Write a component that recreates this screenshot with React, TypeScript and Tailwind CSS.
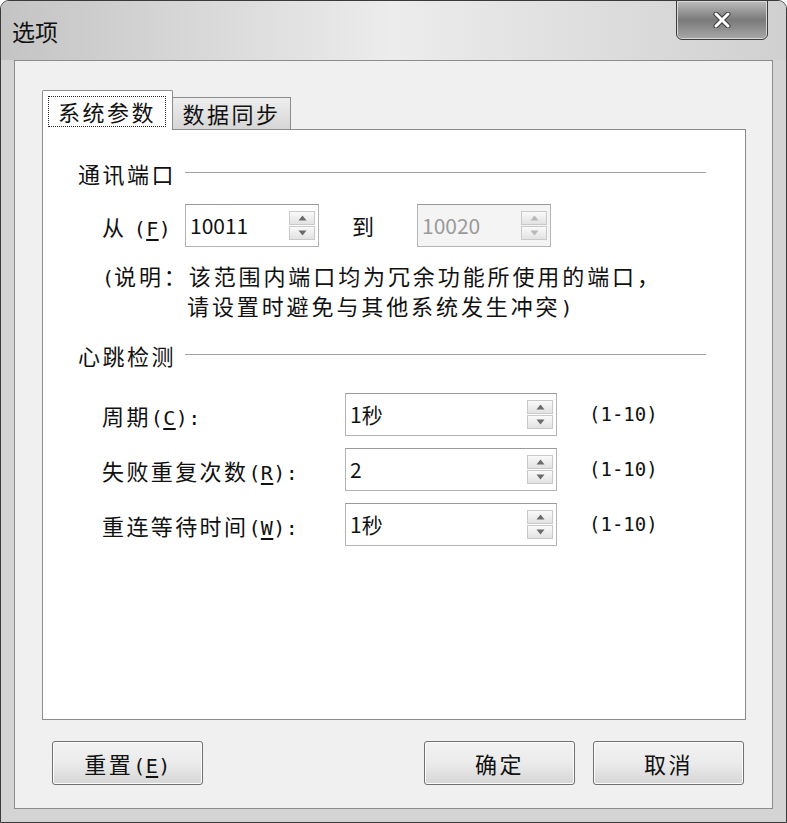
import React from "react";

const CJK = "font-['Noto_Sans_CJK_SC','Noto_Sans',sans-serif]";
const MONO = "font-['DejaVu_Sans_Mono','Liberation_Mono',monospace]";

function Spin({ value, disabled, w }: { value: string; disabled?: boolean; w: string }) {
  return (
    <div
      className={`${w} h-[43px] flex items-stretch border border-[#b4b4b4] border-t-[#9a9a9a] ${
        disabled ? "bg-[#f4f4f4]" : "bg-white"
      }`}
    >
      <div
        className={`flex-1 flex items-center pl-[4px] text-[21px] ${CJK} ${
          disabled ? "text-[#9a9a9a]" : "text-[#111]"
        }`}
      >
        {value}
      </div>
      <div className="w-[29px] flex flex-col py-[6px] pr-[3px] gap-[1px]">
        <div className="flex-1 flex items-center justify-center border border-[#c9c9c9] bg-gradient-to-b from-[#fafafa] to-[#e2e2e2]">
          <svg width="9" height="6" viewBox="0 0 9 6">
            <path d="M4.5 0.5 L8.5 5.5 L0.5 5.5 Z" fill={disabled ? "#b8b8b8" : "#6a6a6a"} />
          </svg>
        </div>
        <div className="flex-1 flex items-center justify-center border border-[#c9c9c9] bg-gradient-to-b from-[#fafafa] to-[#e2e2e2]">
          <svg width="9" height="6" viewBox="0 0 9 6">
            <path d="M0.5 0.5 L8.5 0.5 L4.5 5.5 Z" fill={disabled ? "#b8b8b8" : "#6a6a6a"} />
          </svg>
        </div>
      </div>
    </div>
  );
}

// label like 周期(C): — CJK part, then mono ascii with underlined access key
function Label({ cjk, keyChar, colon, className = "" }: { cjk: string; keyChar: string; colon?: boolean; className?: string }) {
  return (
    <span className={`text-[22px] leading-[28px] tracking-[2.4px] text-[#111] ${CJK} ${className}`}>
      {cjk}
      <span className={`${MONO} text-[20px] leading-none tracking-[0.4px]`}>
        (<span className="underline underline-offset-[3px]">{keyChar}</span>){colon ? ":" : ""}
      </span>
    </span>
  );
}

function GroupHeader({ title }: { title: string }) {
  return (
    <div className="flex items-center h-[28px] pl-[35px] pr-[39px]">
      <span className={`text-[22px] tracking-[2.5px] text-[#111] ${CJK}`}>{title}</span>
      <div className="flex-1 ml-[9px] h-[2px] border-t border-[#a0a0a0] border-b-white border-b" />
    </div>
  );
}

function Btn({ children }: { children: React.ReactNode }) {
  return (
    <button
      className={`w-[151px] h-[44px] rounded-[3px] border border-[#707070] bg-gradient-to-b from-[#f2f2f2] via-[#ebebeb] to-[#d6d6d6] text-[22px] tracking-[2.5px] text-[#111] ${CJK} shadow-[inset_0_0_0_1px_#fcfcfc]`}
    >
      {children}
    </button>
  );
}

const ROWS = [
  { cjk: "周期", k: "C", value: "1秒" },
  { cjk: "失败重复次数", k: "R", value: "2" },
  { cjk: "重连等待时间", k: "W", value: "1秒" },
];

export default function App() {
  return (
    <div className="w-[787px] h-[823px] overflow-hidden bg-[#d4d4d4] border border-[#3a3a3a] rounded-t-[9px] flex flex-col">
      {/* title bar */}
      <div className="h-[59px] flex items-start justify-between pl-[11px] pr-[18px] bg-gradient-to-r from-[#c4c4c4] via-[#ececec] to-[#d0d0d0]">
        <span className={`mt-[13px] text-[23px] text-[#111] ${CJK}`}>选项</span>
        <div className="w-[92px] h-[40px] -mt-px rounded-b-[6px] border border-[#3c3c3c] bg-gradient-to-b from-[#bdbdbd] via-[#7a7a7a] to-[#a8a8a8] flex items-center justify-center shadow-[inset_0_0_0_1px_#d8d8d8]">
          <svg width="18" height="16" viewBox="0 0 18 16">
            <path d="M3 2 L15 14 M15 2 L3 14" stroke="#3a3a3a" strokeWidth="5" strokeLinecap="round" />
            <path d="M3 2 L15 14 M15 2 L3 14" stroke="#ffffff" strokeWidth="3" strokeLinecap="round" />
          </svg>
        </div>
      </div>

      {/* client area */}
      <div className="ml-[13px] mr-[13px] h-[749px] bg-[#f0f0f0] border border-[#8c8c8c] flex flex-col">
        <div className="pt-[28px] pl-[27px]">
          {/* tabs */}
          <div className="flex items-end h-[40px]">
            <div className="w-[131px] h-[40px] bg-white border border-[#8c8c8c] border-b-0 rounded-t-[2px] relative z-10 -mb-px pt-[5px] pl-[5px]">
              <div className={`w-[118px] h-[31px] border border-dotted border-[#222] flex items-center justify-center text-[22px] tracking-[2.5px] text-[#111] ${CJK}`}>
                系统参数
              </div>
            </div>
            <div className={`w-[118px] h-[32px] bg-gradient-to-b from-[#eeeeee] to-[#d6d6d6] border border-[#8c8c8c] border-l-0 border-b-0 flex items-center justify-center text-[22px] tracking-[2.5px] text-[#111] ${CJK}`}>
              数据同步
            </div>
          </div>

          {/* panel */}
          <div className="w-[704px] h-[591px] bg-white border border-[#8c8c8c] pt-[29px]">
            <GroupHeader title="通讯端口" />

            <div className="flex items-center mt-[17px] pl-[59px]">
              <Label cjk="从 " keyChar="F" className="w-[83px]" />
              <Spin value="10011" w="w-[134px]" />
              <span className={`ml-[33px] w-[65px] text-[22px] text-[#111] ${CJK}`}>到</span>
              <Spin value="10020" w="w-[134px]" disabled />
            </div>

            <div className={`mt-[13px] h-[60px] pl-[59px] text-[22px] leading-[30px] tracking-[2.9px] text-[#111] ${CJK}`}>
              <div className="h-[30px]">
                <span className={`${MONO} text-[20px] leading-none tracking-normal`}>(</span>说明：该范围内端口均为冗余功能所使用的端口，
              </div>
              <div className="h-[30px] pl-[85px]">
                请设置时避免与其他系统发生冲突<span className={`${MONO} text-[20px] leading-none tracking-normal`}>)</span>
              </div>
            </div>

            <div className="mt-[21px]">
              <GroupHeader title="心跳检测" />
            </div>

            <div className="mt-[24px] flex flex-col gap-[12px]">
              {ROWS.map((r) => (
                <div key={r.cjk} className="flex items-center pl-[59px]">
                  <Label cjk={r.cjk} keyChar={r.k} colon className="w-[243px]" />
                  <Spin value={r.value} w="w-[212px]" />
                  <span className={`ml-[32px] text-[19px] text-[#111] ${MONO}`}>(1-10)</span>
                </div>
              ))}
            </div>
          </div>
        </div>

        {/* buttons */}
        <div className="flex items-center mt-[21px] pl-[37px] pr-[28px]">
          <Btn>
            重置<span className={`${MONO} text-[20px] leading-none tracking-[0.4px]`}>(<span className="underline underline-offset-[3px]">E</span>)</span>
          </Btn>
          <div className="flex-1" />
          <div className="flex gap-[18px]">
            <Btn>确定</Btn>
            <Btn>取消</Btn>
          </div>
        </div>
      </div>
    </div>
  );
}
